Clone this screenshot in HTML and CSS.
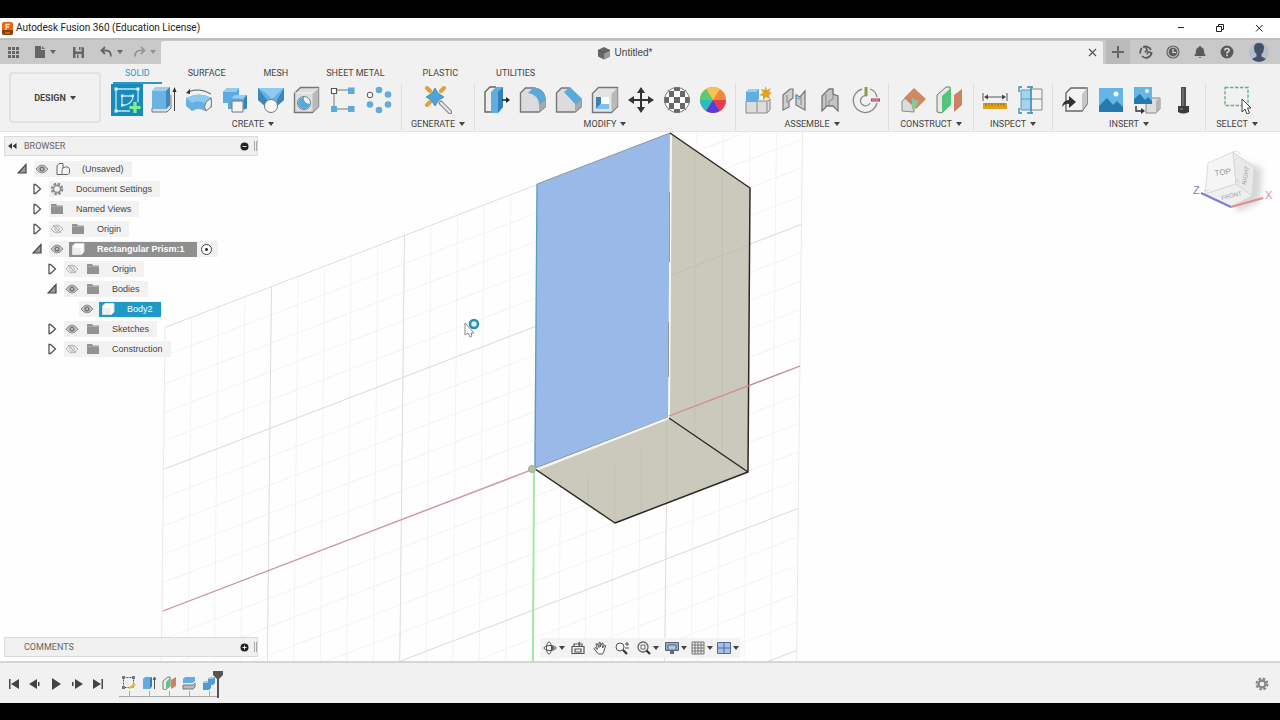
FILE: index.html
```
<!DOCTYPE html>
<html lang="en">
<head>
<meta charset="utf-8">
<title>Autodesk Fusion 360 (Education License)</title>
<link rel="stylesheet" href="styles.css">
</head>
<body>
<svg class="defs" width="0" height="0" aria-hidden="true">
  <symbol id="eye" viewBox="0 0 14 10"><path d="M1 5q6-8 12 0q-6 8-12 0z" fill="#c4c4c4" stroke="#8c8c8c"/><circle cx="7" cy="5" r="2.6" fill="#777"/><circle cx="7" cy="5" r="1" fill="#ddd"/></symbol>
  <symbol id="eye-off" viewBox="0 0 14 10"><path d="M1 5q6-8 12 0q-6 8-12 0z" fill="none" stroke="#b4b4b4"/><circle cx="7" cy="5" r="2.3" fill="none" stroke="#b4b4b4"/><path d="M3 1l8 8" stroke="#aaa"/></symbol>
  <symbol id="folder" viewBox="0 0 14 12"><path d="M1 1h5l1 1.500h6V11H1z" fill="#929292"/><path d="M1 3.500h12" stroke="#bbb" stroke-width=".6"/></symbol>
  <symbol id="closed" viewBox="0 0 10 12"><path d="M2 1.500h1.500L8.500 6l-5 4.500H2z" fill="#fff" stroke="#555" stroke-width="1.300"/></symbol>
  <symbol id="open" viewBox="0 0 10 12"><path d="M9 1.500V10H1z" fill="#9a9a9a" stroke="#444" stroke-width="1.200"/></symbol>
  <symbol id="cube" viewBox="0 0 14 14"><path d="M1.500 4l2.500-2.500h9V10l-2.500 2.500h-9z" fill="#fff" stroke="#ddd"/><path d="M4 6h6v6H2V5z" fill="#eee"/></symbol>
</svg>
<div class="app">
  <header class="titlebar">
    <svg width="12" height="14" viewBox="0 0 12 14"><rect width="11" height="13" rx="2" y="1" fill="#e8650c"/><path d="M0 9h11v3q0 2-2 2H2q-2 0-2-2z" fill="#8e3c0c"/><path d="M4 9V3.500h4M4 6h3" stroke="#ffe2b8" stroke-width="1.500" fill="none"/><path d="M3 12h5" stroke="#e39a60"/></svg>
    <h1>Autodesk Fusion 360 (Education License)</h1>
    <div class="window-buttons">
      <button aria-label="Minimize"><svg width="10" height="10"><path d="M2 4.500h6" stroke="#222"/></svg></button>
      <button aria-label="Restore"><svg width="10" height="10"><path d="M1.500 3.500h5v5h-5zM3.500 3V1.500h5v5H7" stroke="#222" fill="none"/></svg></button>
      <button aria-label="Close window"><svg width="10" height="10"><path d="M2 2l6.500 6.500M8.500 2L2 8.500" stroke="#222"/></svg></button>
    </div>
  </header>

  <div class="appbar">
    <div class="quick">
      <button aria-label="Data panel"><svg width="13" height="13" viewBox="0 0 13 13" fill="#666"><path d="M1 1h3v3H1zM5 1h3v3H5zM9 1h3v3H9zM1 5h3v3H1zM5 5h3v3H5zM9 5h3v3H9zM1 9h3v3H1zM5 9h3v3H5zM9 9h3v3H9z"/></svg></button>
      <button class="caret file" aria-label="File"><svg width="12" height="14" viewBox="0 0 12 14"><path d="M1 1h6v4h4v8H1z" fill="#666"/><path d="M8 1l3 3H8z" fill="#666"/></svg></button>
      <button class="save" aria-label="Save"><svg width="13" height="13" viewBox="0 0 13 13"><path d="M1 1h10l1 1v10H1z" fill="#666"/><path d="M3.500 1v4.500h6V1M3.500 12V8h6v4" fill="#c8c8c8"/><path d="M7 1h1.500v3H7zM5 8.500h1.500V12H5z" fill="#666"/></svg></button>
      <button class="caret" aria-label="Undo"><svg width="13" height="12" viewBox="0 0 13 12"><path d="M5 1L1.500 4.500L5 8M2 4.500h4q5 0 5 6" fill="none" stroke="#666" stroke-width="1.800"/></svg></button>
      <button class="caret dim" aria-label="Redo"><svg width="13" height="12" viewBox="0 0 13 12"><path d="M8 1l3.500 3.500L8 8M11 4.500H7q-5 0-5 6" fill="none" stroke="#929292" stroke-width="1.600"/></svg></button>
    </div>
    <div class="doc-tab">
      <div class="doc-name">
        <svg width="14" height="14" viewBox="0 0 14 14"><path d="M1 4l6-3 6 3v6.500L7 13.500 1 10.500z" fill="#666"/><path d="M7 7l6-3v6.500l-6 3z" fill="#9a9a9a"/><path d="M1 4l6 3 6-3" fill="none" stroke="#555"/></svg>
        <span>Untitled*</span>
      </div>
      <button aria-label="Close document"><svg width="9" height="9"><path d="M1 1l7 7M8 1L1 8" stroke="#555" stroke-width="1.200"/></svg></button>
    </div>
    <button class="new-tab" aria-label="New design"><svg width="12" height="12"><path d="M6 0v12M0 6h12" stroke="#666" stroke-width="2"/></svg></button>
    <div class="account">
      <button aria-label="Extensions"><svg width="14" height="14" viewBox="0 0 14 14"><path d="M4 2.300A5.500 5.500 0 0 1 12 5M12.500 7A5.500 5.500 0 0 1 3 11M1.500 8.500A5.500 5.500 0 0 1 3 3" fill="none" stroke="#5a5a5a" stroke-width="1.800"/><path d="M6 1.500l2 3-2 3M12.500 8L9 6.500l-1 3" fill="none" stroke="#5a5a5a" stroke-width="1.600"/></svg></button>
      <button aria-label="Job status"><svg width="14" height="14" viewBox="0 0 14 14"><circle cx="7" cy="7" r="6" fill="#bbb" stroke="#666" stroke-width="1.200"/><circle cx="7" cy="7" r="4.300" fill="#5c5c5c"/><path d="M7 4v3.500h3" stroke="#ddd" stroke-width="1.200" fill="none"/></svg></button>
      <button aria-label="Notifications"><svg width="14" height="14" viewBox="0 0 14 14"><path d="M7 1q1 0 1 1q3 1 3 4q0 3 1.500 4v1h-11v-1Q3 9 3 6q0-3 3-4q0-1 1-1zM5.500 12h3q-1.500 1.800-3 0z" fill="#5a5a5a"/></svg></button>
      <button aria-label="Help"><svg width="14" height="14" viewBox="0 0 14 14"><circle cx="7" cy="7" r="6.500" fill="#5a5a5a"/><path d="M4.800 5.500q0-2 2.200-2t2.200 1.800Q9.200 6.500 7 7.500v1M7 9.600v1.600" stroke="#ddd" stroke-width="1.500" fill="none"/></svg></button>
      <button class="avatar" aria-label="Profile"><svg width="20" height="20" viewBox="0 0 20 20"><circle cx="10" cy="10" r="10" fill="#b4bfcc"/><path d="M10 1q5 0 5 5q0 4-2.500 6v2.500l4.500 2.500q-3 3-7 3t-7-3l4.500-2.500V12Q5 10 5 6q0-5 5-5z" fill="#44506a"/></svg></button>
    </div>
  </div>

  <section class="ribbon">
    <button class="workspace caret">DESIGN</button>
    <div class="ribbon-main">
      <nav class="tabs">
        <button class="active">SOLID</button><button>SURFACE</button><button>MESH</button><button>SHEET METAL</button><button>PLASTIC</button><button>UTILITIES</button>
      </nav>
      <div class="groups">
        <div class="group create">
          <div class="tools">
            <button class="on" aria-label="Create sketch"><svg viewBox="0 0 28 28"><g fill="none" stroke="#bfe6f7" stroke-width="1.300"><path d="M3 3h22v13M3 3v22h14M9 19v-9h11q0 6-7 9z"/></g><path d="M1.500 1.500h3v3h-3zM23.500 1.500h3v3h-3zM1.500 23.500h3v3h-3zM8 8.500h2.500V11H8zM18.500 8.500H21V11h-2.500zM8 18h2.500v2.500H8z" fill="#e4f6ff"/><path d="M22 16v11M16.500 21.500h11" stroke="#82f08a" stroke-width="3.200"/></svg></button>
            <button aria-label="Extrude"><svg viewBox="0 0 28 28"><path d="M3 22v4h15l4-4V9" fill="#ddd" stroke="#777"/><path d="M3 5l4-4h14v18l-4 4H3z" fill="#6bb1e2"/><path d="M3 5l4-4h14l-4 4z" fill="#9bd0f3"/><path d="M17 5l4-4v18l-4 4z" fill="#3f88bd"/><path d="M25.500 4v21" stroke="#444"/><path d="M23.500 6l2-5 2 5z" fill="#333"/></svg></button>
            <button aria-label="Revolve"><svg viewBox="0 0 28 28"><path d="M1 12q13-7 26 0v9l-7 4q-6-4-13 0l-6-5z" fill="#67afe0"/><path d="M1 12l6 5q7-4 13 1l7-6Q14 5 1 12z" fill="#8ecaef"/><path d="M21 16l5-4q1 6 0 9l-5 4q-3-4 0-9z" fill="#eee" stroke="#777"/><path d="M3 6q11-5 23 2" fill="none" stroke="#555"/><path d="M1 7l4-4v5z" fill="#333"/></svg></button>
            <button aria-label="Hole"><svg viewBox="0 0 28 28"><path d="M2 6l4-4h12v7h8v14H7v-6H2z" fill="#5eaae0"/><path d="M2 6l4-4h12l-3 4zM10 12l4-3h12l-3 4z" fill="#93cdf2"/><path d="M23 12l3-3v12l-3 3z" fill="#387fb5"/><path d="M11 15h11v11H11z" fill="#f3f3f3" stroke="#777"/></svg></button>
            <button aria-label="Form"><svg viewBox="0 0 28 28"><path d="M1 2h26v12l-9 8h-8l-9-8z" fill="#68b0e2"/><path d="M1 2h26l-6 5-6 6-6-6z" fill="#8ecbf2"/><path d="M1 2l9 12v8l-9-8zM27 2l-7 12v6l7-6z" fill="#3c86bb"/><circle cx="14" cy="20" r="6.500" fill="#f8f8f8" stroke="#777"/></svg></button>
            <button aria-label="Primitive"><svg viewBox="0 0 28 28"><path d="M1.500 7.500l6-6h18v19l-6 6h-18z" fill="#dedede" stroke="#777" stroke-width="1.400"/><path d="M19.500 7.500l6-6v19l-6 6z" fill="#b9b9b9"/><path d="M2 7h17.500l5-5" fill="none" stroke="#f6f6f6"/><circle cx="11" cy="17" r="6.500" fill="#e9f5fc" stroke="#7a7a7a"/><path d="M11 11q-1 6 6 7a6 6 0 1 1-6-7z" fill="#58a8dc"/></svg></button>
            <button aria-label="Rectangular pattern"><svg viewBox="0 0 28 28"><path d="M5 4h18M5 4v19M8 23h12" stroke="#777"/><path d="M2.500 2.500h5v5h-5z" fill="#fff" stroke="#555" stroke-width="1.200"/><path d="M19 1.500h6.500V8H19zM2 20h6v6H2zM19 20h6.500v6H19z" fill="#5ea9da"/></svg></button>
            <button aria-label="Circular pattern"><svg viewBox="0 0 28 28" fill="#63acd9"><circle cx="14" cy="4" r="3.300"/><circle cx="23" cy="8.500" r="3.300"/><circle cx="23" cy="18.500" r="3.300"/><circle cx="14" cy="24" r="3.300"/><circle cx="5" cy="18.500" r="3.300"/><circle cx="5" cy="9" r="2.800" fill="#fff" stroke="#555"/></svg></button>
          </div>
          <button class="label caret">CREATE</button>
        </div>
        <div class="group wide">
          <div class="tools">
            <button aria-label="Generative design"><svg viewBox="0 0 28 28"><path d="M17 17l9 9" stroke="#777" stroke-width="4.500" stroke-linecap="round"/><path d="M17 17l9 9" stroke="#e5e5e5" stroke-width="2.500" stroke-linecap="round"/><path d="M3 2l3 3M20 2l-3 3M3 19l3-3" stroke="#dda23a" stroke-width="4" stroke-linecap="round"/><path d="M11 2l3 5 6 4-5 3-4 6-4-6-5-3 6-4z" fill="#4ea4d6" stroke="#367ba8" stroke-width=".7"/></svg></button>
          </div>
          <button class="label caret">GENERATE</button>
        </div>
        <div class="group">
          <div class="tools">
            <button aria-label="Press pull"><svg viewBox="0 0 28 28"><path d="M8 26H2V6l5-5h6" fill="#eee" stroke="#666" stroke-width="1.400"/><path d="M8 6l5-5h7v20l-5 6H8z" fill="#60ade0"/><path d="M15 6l5-5v20l-5 6z" fill="#337fb7"/><path d="M19 14h5" stroke="#222" stroke-width="1.500"/><path d="M23 11l4 3-4 3z" fill="#222"/></svg></button>
            <button aria-label="Fillet"><svg viewBox="0 0 28 28"><path d="M1.500 26V7l5-5H15q11 2 11 12v7l-6 5z" fill="#dcdcdc" stroke="#777" stroke-width="1.400"/><path d="M20 18v8l6-5v-7z" fill="#aaa"/><path d="M9 7l6-6q11 3 12 13l-7 5Q20 9 9 7z" fill="#59a9da"/></svg></button>
            <button aria-label="Chamfer"><svg viewBox="0 0 28 28"><path d="M1.500 26V7l5-5H14l12 11v8l-6 5z" fill="#dcdcdc" stroke="#777" stroke-width="1.400"/><path d="M20 18v8l6-5v-8z" fill="#aaa"/><path d="M9 6l6-5 12 12-6 6z" fill="#59a9da"/></svg></button>
            <button aria-label="Shell"><svg viewBox="0 0 28 28"><path d="M1.500 7.500l6-6h19v19l-6 6h-19z" fill="#e3e3e3" stroke="#777" stroke-width="1.400"/><path d="M20.500 8l6-6v18l-6 6z" fill="#b9b9b9"/><path d="M5 11h13v12H5z" fill="#fff"/><path d="M5 11h5v7l-5 5z" fill="#3582b9"/><path d="M10 18h8v5H5z" fill="#7cc0ec"/></svg></button>
            <button aria-label="Move"><svg viewBox="0 0 28 28"><path d="M14 3v22M3 14h22" stroke="#333" stroke-width="2"/><path d="M14 1l4 6h-8zM14 27l4-6h-8zM1 14l6-4v8zM27 14l-6-4v8z" fill="#333"/></svg></button>
            <button aria-label="Physical material"><svg viewBox="0 0 28 28"><clipPath id="ball"><circle cx="14" cy="14" r="13"/></clipPath><g clip-path="url(#ball)"><path d="M0 0h28v28H0z" fill="#fff"/><path d="M0 0h6v5H0zM11 0h6v5h-6zM22 0h6v5h-6zM6 5h5v6H6zM17 5h5v6h-5zM0 11h6v6H0zM11 11h6v6h-6zM22 11h6v6h-6zM6 17h5v6H6zM17 17h5v6h-5zM0 23h6v5H0zM11 23h6v5h-6zM22 23h6v5h-6z" fill="#686868"/></g><circle cx="14" cy="14" r="12.500" fill="none" stroke="#777"/></svg></button>
            <button aria-label="Appearance"><svg viewBox="0 0 28 28"><circle cx="14" cy="14" r="13" fill="#f2873a"/><path d="M14 14L7 3Q14-1 21 3z" fill="#f3c353"/><path d="M14 14L1 14Q1 7 7 3z" fill="#5ccb76"/><path d="M14 14L7 25Q1 20 1 14z" fill="#28bcc4"/><path d="M14 14l7 11q-7 4-14 0z" fill="#583bd9"/><path d="M14 14h13q0 7-6 11z" fill="#e93a54"/></svg></button>
          </div>
          <button class="label caret">MODIFY</button>
        </div>
        <div class="group">
          <div class="tools">
            <button aria-label="New component"><svg viewBox="0 0 28 28"><path d="M2 15h22l2-2v11l-3 3H2z" fill="#ddd" stroke="#888"/><path d="M13 15v11M23 16v10" stroke="#888"/><path d="M2 6l3-3h10v10l-3 3H2z" fill="#62aee2"/><path d="M2 6l3-3h10l-3 3z" fill="#97d0f4"/><path d="M21 0l2 4 4-2-2 4 3 1-3 2 1 4-4-2-3 3v-4l-4-1 4-2-2-4 4 1z" fill="#e6a01f"/></svg></button>
            <button aria-label="Joint"><svg viewBox="0 0 28 28"><path d="M3 24V9l7-6h3v9l-4 3v6zM16 9l4 2 5-6v19l-9-5z" fill="#cfcfcf" stroke="#777" stroke-width="1.200"/><path d="M7 9v8M21 11v8" stroke="#aaa" stroke-width="2"/><path d="M17 8l-1 4 4 1" stroke="#58a5cf" fill="none"/></svg></button>
            <button aria-label="As-built joint"><svg viewBox="0 0 28 28"><path d="M6 25V10l7-7h4v5l5 2v15l-5-5h-6z" fill="#c4c4c4" stroke="#777" stroke-width="1.300"/><path d="M10 8v13M17 4v9l-4 2v5" stroke="#888" fill="none"/></svg></button>
            <button aria-label="Joint origin"><svg viewBox="0 0 28 28"><path d="M10 3a12 12 0 1 0 15 14M18 17a5 5 0 1 1-3-7M18 3q6 2 7 8" fill="none" stroke="#888" stroke-width="1.300"/><path d="M14 1v9" stroke="#8c9e45" stroke-width="3"/><path d="M19 14h9" stroke="#b73952" stroke-width="3"/><path d="M20 14h7" stroke="#fff" stroke-width=".6"/></svg></button>
          </div>
          <button class="label caret">ASSEMBLE</button>
        </div>
        <div class="group mid">
          <div class="tools">
            <button aria-label="Offset plane"><svg viewBox="0 0 28 28"><path d="M3 25V15l5-4 7 7v8z" fill="#d8dde0" stroke="#888"/><path d="M5 12L15 2l12 11-10 10z" fill="#cc8055" opacity=".92"/><path d="M13 11l3 3 4 1-3 6-4 3" fill="#8dc59a"/></svg></button>
            <button aria-label="Midplane"><svg viewBox="0 0 28 28"><path d="M2 26V9l9-8h4v18l-8 8z" fill="#e8e8e8" stroke="#777"/><path d="M7 10l9-8v17l-9 8z" fill="#52c57a"/><path d="M19 9l8-6v16l-8 7z" fill="#cc835f"/></svg></button>
          </div>
          <button class="label caret">CONSTRUCT</button>
        </div>
        <div class="group tight">
          <div class="tools">
            <button aria-label="Measure"><svg viewBox="0 0 28 28"><path d="M2 7v8M26 7v8M4 11h20" stroke="#555" fill="none"/><path d="M3 11l4-2.500v5zM25 11l-4-2.500v5z" fill="#444"/><path d="M2 17h24v6H2z" fill="#dda21f"/><path d="M5 17v3M8 17v2M11 17v3M14 17v2M17 17v3M20 17v2M23 17v3" stroke="#7e631f"/></svg></button>
            <button aria-label="Section analysis"><svg viewBox="0 0 28 28"><path d="M13 3h12v21H13M13 13h12" fill="#f2f2f2" stroke="#888"/><path d="M4 4h10v20H4z" fill="#a4d3ed"/><path d="M4 4h10v20H4zM4 13h10" fill="none" stroke="#6298b7"/><path d="M5 1H2v5M10 1h6M14 1v26M5 27H2v-5M10 27h6" fill="none" stroke="#3388b8" stroke-width="1.300"/></svg></button>
          </div>
          <button class="label caret">INSPECT</button>
        </div>
        <div class="group">
          <div class="tools">
            <button aria-label="Insert derive"><svg viewBox="0 0 28 28"><path d="M5 7l5-5h16v16l-5 7H5z" fill="#f3f3f3" stroke="#666" stroke-width="1.400"/><path d="M21 8l5-6v16l-5 7z" fill="#c5c5c5"/><path d="M1 21q1-7 7-7v-4l7 6-7 6v-4q-4-1-7 3z" fill="#333"/></svg></button>
            <button aria-label="Canvas"><svg viewBox="0 0 28 28"><path d="M2 2h24v24H2z" fill="#63b6e6"/><path d="M2 20l8-8 6 7 4-4 6 6v5H2z" fill="#2678ad"/><circle cx="19" cy="8" r="2.500" fill="#fff"/></svg></button>
            <button aria-label="Decal"><svg viewBox="0 0 28 28"><path d="M13 15l4-3h10v11l-4 4H13z" fill="#ddd" stroke="#888"/><path d="M23 15l4-3v11l-4 4z" fill="#b5b5b5"/><path d="M1 1h18v17H1z" fill="#63b6e6"/><path d="M1 13l6-5 5 6 3-3 4 4v3H1z" fill="#2678ad"/><circle cx="14" cy="5" r="2" fill="#fff"/><path d="M3 20v5h6" stroke="#333" stroke-width="1.400" fill="none"/><path d="M8 22l4 3-4 3z" fill="#333"/></svg></button>
            <button aria-label="Insert fastener"><svg viewBox="0 0 28 28"><path d="M12 1h5v20h-5z" fill="#4d4d4d"/><path d="M9 20h11v6q-6 3-11 0z" fill="#3c3c3c"/><path d="M14 2v18M11 23h3" stroke="#8b8b8b"/></svg></button>
          </div>
          <button class="label caret">INSERT</button>
        </div>
        <div class="group select">
          <div class="tools">
            <button aria-label="Select"><svg viewBox="0 0 28 28"><path d="M2 1.500h23v18H2z" fill="none" stroke="#64b37b" stroke-width="1.300" stroke-dasharray="3.500 1.500"/><path d="M19 13v13l3-3 2 5 2.500-1-2-5H28z" fill="#fff" stroke="#444"/></svg></button>
          </div>
          <button class="label caret">SELECT</button>
        </div>
      </div>
    </div>
  </section>

  <main class="viewport">
    <svg class="scene" viewBox="0 0 1280 529" preserveAspectRatio="xMidYMid slice" role="img" aria-label="Rectangular prism on the sketch plane">
      <defs>
        <pattern id="minor" width="26.600" height="28.400" patternUnits="userSpaceOnUse"><path d="M26.600 0H0v28.400" fill="none" stroke="#f0f0f0" stroke-width="1.400"/></pattern>
        <pattern id="major" width="133" height="142" patternUnits="userSpaceOnUse"><path d="M133 0H0v142" fill="none" stroke="#dcdcdc" stroke-width="1.800"/></pattern>
      </defs>
      <g transform="matrix(1 -.384 -.011 1 537 52)">
        <path d="M-372 0h638v640h-638z" fill="url(#minor)"/>
        <path d="M-372 0h638v640h-638z" fill="url(#major)"/>
        <path d="M-372 0V640M266 0V640" stroke="#ebebeb"/>
      </g>
      <path d="M163 479L534 337" stroke="#cf969d" stroke-width="1.300"/>
      <path d="M534 338L533 529" stroke="#96ec9a" stroke-width="1.800"/>
      <path d="M670 1L750 56L748 340L669 285z" fill="#cac9bc"/>
      <path d="M535 337L669 286L748 340L615 391z" fill="#cac9bc"/>
      <path d="M671 143l78-30M561 347V356M588 345V372M615 330V390M641 318V380M667 290V370M695 20V304M722 40V320" stroke="#c1c0b4" stroke-width="1"/>
      <path d="M537 52L670 1L669 285L535 336z" fill="#99b9e8"/>
      <path d="M537 52L670 1M535 336L669 285" stroke="#92979f" fill="none"/>
      <path d="M537 52L535 336" stroke="#5b9fb5" stroke-width="1.300"/>
      <path d="M671 2L669 286L536 338" fill="none" stroke="#f6f6f4" stroke-width="2"/>
      <path d="M669.500 60v70M668.500 190v55" stroke="#888" stroke-width=".8"/>
      <path d="M670 1L750 56L748 340L669 286M748 340L615 391L535 337" fill="none" stroke="#292924" stroke-width="1.500" stroke-linejoin="round"/>
      <path d="M669 284L800 234" stroke="#cc8a93" stroke-width="1.300"/>
      <circle cx="532" cy="337" r="3.500" fill="#a9c4a5" stroke="#a9a9a9"/>
      <path d="M465 191v12l3-2 2 4 2-1-1-3h3z" fill="#fff" stroke="#888"/>
      <circle cx="474" cy="192" r="4" fill="#d9f2fa" stroke="#248fb8" stroke-width="2.500"/>
    </svg>

    <aside class="browser">
      <header class="panel-head">
        <button aria-label="Collapse browser"><svg width="9" height="6"><path d="M4 0v6L0 3zM8.500 0v6l-4-3z" fill="#333"/></svg></button>
        <h2>BROWSER</h2>
        <button aria-label="Minimize browser"><svg width="9" height="9"><circle cx="4.500" cy="4.500" r="4" fill="#222"/><path d="M2.500 4.500h4" stroke="#ddd"/></svg></button><i></i>
      </header>
      <ul class="tree">
        <li>
          <div class="row"><button aria-label="Collapse"><svg><use href="#open"/></svg></button><div class="pill"><svg class="eye"><use href="#eye"/></svg><span class="node"><svg viewBox="0 0 14 14"><path d="M1 12.500V4l2-2.500h4V6l2-1h3l1.500 2v4l-2 1.500z" fill="#f6f6f6" stroke="#666"/><path d="M7 6l-1 1.500V12" fill="none" stroke="#777"/></svg>(Unsaved)</span></div></div>
          <ul>
            <li><div class="row"><button aria-label="Expand"><svg><use href="#closed"/></svg></button><div class="pill"><span class="node bare"><svg viewBox="0 0 14 14"><circle cx="7" cy="7" r="5" fill="none" stroke="#8b8b8b" stroke-width="2.500" stroke-dasharray="2.400 1.527"/><circle cx="7" cy="7" r="3.500" fill="none" stroke="#8b8b8b" stroke-width="1.500"/></svg>Document Settings</span></div></div></li>
            <li><div class="row"><button aria-label="Expand"><svg><use href="#closed"/></svg></button><div class="pill"><span class="node bare"><svg><use href="#folder"/></svg>Named Views</span></div></div></li>
            <li><div class="row"><button aria-label="Expand"><svg><use href="#closed"/></svg></button><div class="pill"><svg class="eye"><use href="#eye-off"/></svg><span class="node"><svg><use href="#folder"/></svg>Origin</span></div></div></li>
            <li>
              <div class="row"><button aria-label="Collapse"><svg><use href="#open"/></svg></button><div class="pill"><svg class="eye"><use href="#eye"/></svg><span class="node current"><svg><use href="#cube"/></svg>Rectangular Prism:1</span><input type="radio" checked aria-label="Activate component"></div></div>
              <ul>
                <li><div class="row"><button aria-label="Expand"><svg><use href="#closed"/></svg></button><div class="pill"><svg class="eye"><use href="#eye-off"/></svg><span class="node"><svg><use href="#folder"/></svg>Origin</span></div></div></li>
                <li><div class="row"><button aria-label="Collapse"><svg><use href="#open"/></svg></button><div class="pill"><svg class="eye"><use href="#eye"/></svg><span class="node"><svg><use href="#folder"/></svg>Bodies</span></div></div>
                  <ul><li><div class="row leaf"><div class="pill"><svg class="eye"><use href="#eye"/></svg><span class="node selected"><svg><use href="#cube"/></svg>Body2</span></div></div></li></ul>
                </li>
                <li><div class="row"><button aria-label="Expand"><svg><use href="#closed"/></svg></button><div class="pill"><svg class="eye"><use href="#eye"/></svg><span class="node"><svg><use href="#folder"/></svg>Sketches</span></div></div></li>
                <li><div class="row"><button aria-label="Expand"><svg><use href="#closed"/></svg></button><div class="pill"><svg class="eye"><use href="#eye-off"/></svg><span class="node"><svg><use href="#folder"/></svg>Construction</span></div></div></li>
              </ul>
            </li>
          </ul>
        </li>
      </ul>
    </aside>

    <div class="comments panel-head">
      <h2>COMMENTS</h2>
      <button aria-label="Add comment"><svg width="9" height="9"><circle cx="4.500" cy="4.500" r="4" fill="#222"/><path d="M2.500 4.500h4M4.500 2.500v4" stroke="#eee"/></svg></button><i></i>
    </div>

    <svg class="viewcube" width="84" height="72" viewBox="0 0 84 72" role="img" aria-label="View cube">
      <defs><filter id="soft" x="-30%" y="-30%" width="160%" height="160%"><feGaussianBlur stdDeviation="3"/></filter></defs>
      <path d="M46 14L72 22L70 56L46 66z" fill="#bbb" opacity=".6" filter="url(#soft)"/>
      <path d="M18 17L43 6L46 38L15 48z" fill="#f5f5f5" stroke="#ddd"/>
      <path d="M43 6L64 21L62 50L46 38z" fill="#e9e9e9" stroke="#d8d8d8"/>
      <path d="M15 48L46 38L62 50L40 61z" fill="#efefef" stroke="#d8d8d8"/>
      <path d="M43 6l4-1 4 4M45 36l2-3 3 4M14 45l5-1" fill="none" stroke="#ccc" stroke-dasharray="2 1"/>
      <text x="25" y="30" class="face" transform="rotate(-8 25 30)">TOP</text>
      <text x="32" y="54" class="face small" transform="rotate(-14 32 54)">FRONT</text>
      <text x="56" y="39" class="face small" transform="rotate(-80 56 39)">RIGHT</text>
      <path d="M11 47L41 61" stroke="#7d7bd6" stroke-width="2"/>
      <path d="M41 61L73 52" stroke="#dd8d98" stroke-width="2"/>
      <text x="3" y="48" class="axis z">Z</text><text x="75" y="53" class="axis x">X</text>
    </svg>

    <div class="navbar">
      <button class="caret" aria-label="Orbit"><svg viewBox="0 0 14 14"><ellipse cx="7" cy="7" rx="6" ry="2.500" fill="none" stroke="#555"/><ellipse cx="6" cy="7" rx="2.500" ry="6" fill="none" stroke="#555"/><path d="M8 4l4 3-4 3z" fill="#555"/></svg></button>
      <button aria-label="Look at"><svg viewBox="0 0 14 14"><path d="M1 5.500h12v7H1zM4 8h6v3H4zM3 5V3h3M8 3h3v2M9 1l-2 2 2 2" fill="none" stroke="#555" stroke-width="1.200"/></svg></button>
      <button aria-label="Pan"><svg viewBox="0 0 14 14"><path d="M4.500 12L1 7.500l1-1 2.500 2L3 3l1.200-.5L6 6.500V1.500h1.300V6L9 2l1.200.4L9.500 7l2-3 1 .6L11 10l-1.500 3h-4z" fill="#f8f8f8" stroke="#555"/></svg></button>
      <button aria-label="Zoom"><svg viewBox="0 0 14 14"><circle cx="5" cy="6" r="4" fill="#f5f5f5" stroke="#555"/><path d="M8 9l4 4" stroke="#333" stroke-width="2.200"/><path d="M10 3h4M12 1v4M10 7h4" stroke="#555"/></svg></button>
      <button class="caret" aria-label="Fit"><svg viewBox="0 0 14 14"><circle cx="6" cy="6" r="5" fill="#f5f5f5" stroke="#666" stroke-width="1.300"/><path d="M4 4h4v4H4z" fill="none" stroke="#666"/><path d="M9.500 9.500l3.500 3.500" stroke="#333" stroke-width="2.200"/></svg></button>
      <button class="caret close" aria-label="Display settings"><svg viewBox="0 0 14 14"><path d="M.5 1.500h13v8H.5z" fill="#90aad2" stroke="#5b6673"/><path d="M3 4h8v5H3z" fill="#b1c8e9" stroke="#667"/><path d="M5 10h4v3H5z" fill="#667"/></svg></button>
      <button class="caret close" aria-label="Grid and snaps"><svg viewBox="0 0 14 14"><path d="M1 1h12v12H1zM4 1v12M7 1v12M10 1v12M1 4h12M1 7h12M1 10h12" fill="#eee" stroke="#777"/></svg></button>
      <button class="caret" aria-label="Viewports"><svg viewBox="0 0 14 14"><path d="M.500 1.500h13v11H.500z" fill="#a5bfe7" stroke="#566b8e"/><path d="M7 2v10M1 7h12" stroke="#566b8e"/></svg></button>
    </div>
  </main>

  <footer class="timeline">
    <div class="playback">
      <button aria-label="Go to start"><svg viewBox="0 0 12 12"><path d="M1 1h1.500v10H1zM11 1v10L3 6z"/></svg></button>
      <button aria-label="Step back"><svg viewBox="0 0 12 12"><path d="M8 1v10L0 6zM9 4h1.500v4H9z"/></svg></button>
      <button aria-label="Play"><svg viewBox="0 0 12 12"><path d="M2 0v12l9-6z"/></svg></button>
      <button aria-label="Step forward"><svg viewBox="0 0 12 12"><path d="M4 1v10l8-5zM1 4h1.500v4H1z"/></svg></button>
      <button aria-label="Go to end"><svg viewBox="0 0 12 12"><path d="M9.500 1H11v10H9.500zM1 1v10l8-5z"/></svg></button>
    </div>
    <div class="history">
      <button aria-label="Sketch feature"><svg viewBox="0 0 14 14"><path d="M1.500 1.500h10v10h-10z" fill="none" stroke="#555" stroke-dasharray="2 1"/><path d="M0 0h3v3H0zM10 0h3v3h-3zM0 10h3v3H0z" fill="#777"/><path d="M6 12l6-5 2 2-6 4z" fill="#e8b94c"/></svg></button>
      <button aria-label="Extrude feature"><svg viewBox="0 0 14 14"><path d="M1 3l2-2h7v9l-2 3H1z" fill="#61abe0"/><path d="M8 3l2-2v9l-2 3z" fill="#367eb2"/><path d="M12.500 2v11M11 4l1.500-3L14 4" stroke="#555" fill="none"/></svg></button>
      <button aria-label="Midplane feature"><svg viewBox="0 0 14 14"><path d="M1 13V5l5-4h2v9l-5 4z" fill="#eee" stroke="#777"/><path d="M4 6l4-4v8l-4 3z" fill="#5cc784"/><path d="M9 4l5-3v9l-5 3z" fill="#cb865f"/></svg></button>
      <button aria-label="Split feature"><svg viewBox="0 0 14 14"><path d="M1 3l2-2h10v4l-2 2H1z" fill="#62aee0"/><path d="M1 9h10l2-2v4l-2 2H1z" fill="#bbb" stroke="#777"/></svg></button>
      <button aria-label="Combine feature"><svg viewBox="0 0 14 14"><path d="M1 7l2-2h3V3l2-2h5v6l-2 2H9v3l-2 2H1z" fill="#4f9bd5"/><path d="M6 3l2-2h5l-2 2zM1 7l2-2h3v2z" fill="#96cdf0"/></svg></button>
      <svg class="marker" width="12" height="27" viewBox="0 0 12 27"><path d="M1 0h10v4L7 8v19H5V8L1 4z" fill="#555"/></svg>
    </div>
    <button class="settings" aria-label="Timeline settings"><svg width="14" height="14" viewBox="0 0 14 14"><circle cx="7" cy="7" r="5.500" fill="none" stroke="#888" stroke-width="2" stroke-dasharray="2.600 1.720"/><circle cx="7" cy="7" r="3.500" fill="none" stroke="#888" stroke-width="2.400"/></svg></button>
  </footer>
</div>
</body>
</html>
```
FILE: styles.css
```
* { box-sizing: border-box; }
body {
  margin: 0;
  padding: 18px 0 17px;
  background: #000;
  color: #444;
  font: 9px/12px "Liberation Sans", Arial, sans-serif;
}
.defs { position: absolute; }
svg { display: block; flex: none; }
button {
  display: flex;
  align-items: center;
  justify-content: center;
  margin: 0;
  padding: 0;
  border: 0;
  background: none;
  color: inherit;
  font: inherit;
}
h1, h2, ul { margin: 0; padding: 0; font: inherit; list-style: none; }
.caret::after {
  content: "";
  margin-left: 4px;
  border: solid transparent;
  border-width: 4px 3px 0;
  border-top-color: #444;
}
.app {
  display: flex;
  flex-direction: column;
  min-height: calc(100vh - 35px);
  background: #f1f1f1;
}

.titlebar {
  display: flex;
  align-items: center;
  gap: 2px;
  height: 20px;
  padding: 0 2px;
  background: #fff;
}
.titlebar h1 { color: #222; font: 10px/16px Roboto, "Noto Sans", sans-serif; }
.window-buttons { display: flex; margin-left: auto; }
.window-buttons button { width: 39px; }

.appbar {
  display: flex;
  height: 26px;
  border-top: 2px solid #bdbdbd;
  background: #c9c9c9;
}
.quick { display: flex; align-items: center; width: 161px; padding-left: 7px; }
.quick .file { margin-left: 14px; }
.quick .save { margin: 0 15px 0 16px; }
.quick .caret + .caret { margin-left: 10px; }
.quick .caret::after { border-top-color: #666; }
.quick .dim::after { border-top-color: #929292; }
.doc-tab {
  display: flex;
  flex: 1;
  align-items: center;
  margin-top: 1px;
  padding-right: 6px;
  border-radius: 3px 3px 0 0;
  background: #f1f1f1;
}
.doc-name {
  display: flex;
  flex: 1;
  align-items: center;
  justify-content: center;
  gap: 4px;
  font-size: 10px;
}
.new-tab { width: 24px; margin-left: 3px; background: #bababa; }
.account { display: flex; align-items: center; padding-left: 2px; width: 150px; }
.account button { width: 27px; }
.account .avatar { width: 38px; }

.ribbon { display: flex; height: 68px; border-bottom: 1px solid #e4e4e4; }
.ribbon, .panel-head { font-family: Roboto, Arial, sans-serif; }
.workspace {
  width: 92px;
  height: 51px;
  margin: 8px 7px 0 9px;
  border: 2px solid #e2e2e2;
  border-radius: 4px;
  font-weight: bold;
}
.ribbon-main { flex: 1; min-width: 0; }
.tabs { display: flex; gap: 14px; height: 20px; padding-left: 5px; }
.tabs button { padding: 0 12px; border-bottom: 2px solid transparent; }
.tabs .active { border-color: #2b98c6; color: #2b98c6; }
.groups { display: flex; }
.group { padding: 0 4px; border-right: 1px solid #dedede; height: 46px; }
.create { padding: 0 4px 0 1px; }
.wide { padding: 0 18px; }
.mid { padding: 0 6px; }
.tight { padding: 0 3px; }
.select { flex: 1; max-width: 62px; padding: 0 12px; border: 0; }
.tools { display: flex; justify-content: center; height: 32px; }
.tools button { width: 36px; }
.tools svg { width: 28px; height: 28px; }
.tools .on { width: 32px; margin: 0 2px; background: #198bb9; }
.label { height: 16px; margin: 0 -12px; width: calc(100% + 24px); }

.viewport { position: relative; flex: 1; min-height: 260px; overflow: hidden; background: #fefefe; }
.scene { position: absolute; width: 100%; height: 100%; }
.browser { position: absolute; top: 4px; left: 4px; width: 254px; }
.panel-head {
  display: flex;
  align-items: center;
  height: 20px;
  padding-left: 3px;
  border: 1px solid #dadada;
  background: #f0f0f0;
  color: #666;
}
.panel-head h2 { flex: 1; margin-left: 7px; }
.panel-head i { width: 3px; height: 10px; margin-left: 5px; border: solid #aaa; border-width: 0 1px; }
.comments { position: absolute; bottom: 4px; left: 4px; width: 254px; }
.comments h2 { margin-left: 16px; }
.tree { padding: 3px 0 0 13px; }
.tree ul { padding-left: 15px; }
.row { display: flex; align-items: center; height: 20px; }
.leaf { padding-left: 17px; }
.row button { width: 10px; margin-right: 7px; }
.row button svg { width: 10px; height: 12px; }
.pill { display: flex; align-items: center; height: 16px; padding-left: 1px; background: #f2f2f2; }
.pill .eye { width: 14px; height: 10px; margin-right: 5px; }
.node { display: flex; align-items: center; gap: 12px; height: 15px; padding: 0 8px 0 2px; white-space: nowrap; }
.node svg { width: 14px; height: 14px; }
.bare { padding-left: 0; }
.current, .selected { color: #fff; }
.current { padding-right: 12px; background: #8f8f8f; font-weight: bold; }
.selected { background: #2199c6; }
.row input {
  appearance: none;
  width: 11px;
  height: 11px;
  margin: 0 6px 0 4px;
  border: 1px solid #444;
  border-radius: 50%;
  background: radial-gradient(#333 0 1px, #fff 2px);
}

.viewcube { position: absolute; top: 14px; right: 6px; }
.face { fill: #999; font-size: 8px; }
.small { font-size: 6px; }
.axis { font-size: 11px; }
.z { fill: #7f7fd5; }
.x { fill: #e58d99; }

.navbar {
  position: absolute;
  right: 0;
  bottom: 3px;
  left: 0;
  display: flex;
  align-items: center;
  gap: 8px;
  width: fit-content;
  height: 20px;
  margin: 0 auto;
  padding: 0 3px;
  background: #f3f3f3;
}
.navbar svg { width: 14px; height: 14px; }
.navbar .caret { margin-right: -2px; }
.navbar .close { margin-right: -4px; }
.navbar .caret::after { margin-left: 2px; }

.timeline {
  display: flex;
  align-items: flex-start;
  height: 42px;
  padding: 8px 11px 0 3px;
  border-top: 2px solid #d5d5d5;
}
.playback { display: flex; height: 26px; }
.playback button { width: 21px; }
.playback svg { width: 12px; height: 12px; fill: #444; }
.history { display: flex; margin-left: 11px; }
.history button {
  width: 20px;
  height: 26px;
  padding-bottom: 2px;
  background: linear-gradient(#aaa, #aaa) 50% 100% / 1px 5px no-repeat;
  border-bottom: 1px solid #aaa;
}
.history button svg { width: 14px; height: 14px; }
.marker { margin-left: -7px; }
.settings { height: 26px; margin-left: auto; }
```
